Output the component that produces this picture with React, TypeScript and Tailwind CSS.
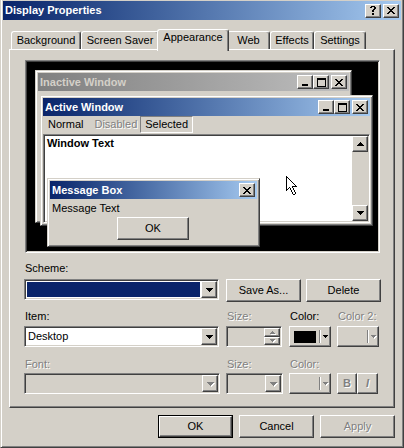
import React from "react";

// classic 3D edges
const raised =
  "border border-t-white border-l-white border-r-[#404040] border-b-[#404040] shadow-[inset_-1px_-1px_#808080,inset_1px_1px_#d4d0c8]";
const sunken =
  "border border-t-[#808080] border-l-[#808080] border-r-white border-b-white shadow-[inset_1px_1px_#404040,inset_-1px_-1px_#d4d0c8]";
const frame =
  "border border-t-[#d4d0c8] border-l-[#d4d0c8] border-r-[#404040] border-b-[#404040] shadow-[inset_1px_1px_#fff,inset_-1px_-1px_#808080]";
const dim = "text-[#808080] [text-shadow:1px_1px_0_#fff]";

// pixel glyphs: '#' = ink, '.' = paper, ' ' = transparent
const CLOSE = ["##    ##", " ##  ## ", "  ####  ", "   ##   ", "  ####  ", " ##  ## ", "##    ##"];
const MIN = ["      ", "      ", "      ", "      ", "      ", "      ", "######", "######"];
const MAX = ["#########", "#########", "#       #", "#       #", "#       #", "#       #", "#       #", "#       #", "#########"];
const HELP = [" #### ", "##  ##", "    ##", "   ## ", "  ##  ", "  ##  ", "      ", "  ##  ", "  ##  "];
const DOWN = ["#######", " ##### ", "  ###  ", "   #   "];
const UP = ["   #   ", "  ###  ", " ##### ", "#######"];
const DOWN_SM = ["#####", " ### ", "  #  "];
const UP_SM = ["  #  ", " ### ", "#####"];
const CURSOR = [
  "#",
  "##",
  "#.#",
  "#..#",
  "#...#",
  "#....#",
  "#.....#",
  "#......#",
  "#.......#",
  "#........#",
  "#.....#####",
  "#..#..#",
  "#.# #..#",
  "##  #..#",
  "#    #..#",
  "     #..#",
  "      #..#",
  "      #..#",
  "       ##",
];

function Pix({ rows, ink = "#000", paper = "#fff", className = "" }: { rows: string[]; ink?: string; paper?: string; className?: string }) {
  const w = Math.max(...rows.map((r) => r.length));
  return (
    <svg width={w} height={rows.length} shapeRendering="crispEdges" className={`block ${className}`}>
      {rows.flatMap((r, y) =>
        r.split("").map((c, x) =>
          c === " " ? null : <rect key={`${x}-${y}`} x={x} y={y} width={1} height={1} fill={c === "#" ? ink : paper} />
        )
      )}
    </svg>
  );
}

// greyed-out glyph with the white emboss under it
function DimPix({ rows }: { rows: string[] }) {
  return (
    <div className="relative">
      <Pix rows={rows} ink="#fff" className="absolute left-[1px] top-[1px]" />
      <Pix rows={rows} ink="#808080" className="relative" />
    </div>
  );
}

function CapBtn({ glyph, className = "" }: { glyph: string[]; className?: string }) {
  return (
    <div className={`${raised} bg-[#d4d0c8] w-[16px] h-[14px] flex items-center justify-center ${className}`}>
      <Pix rows={glyph} />
    </div>
  );
}

function Caption({ title, active, full }: { title: string; active: boolean; full: boolean }) {
  return (
    <div
      className={`h-[18px] flex items-center px-[2px] bg-linear-to-r ${
        active ? "from-[#0a246a] to-[#a6caf0] text-white" : "from-[#808080] to-[#c0c0c0] text-[#d4d0c8]"
      }`}
    >
      <span className="flex-1 font-bold">{title}</span>
      {full && <CapBtn glyph={MIN} />}
      {full && <CapBtn glyph={MAX} />}
      <CapBtn glyph={CLOSE} className={full ? "ml-[2px]" : ""} />
    </div>
  );
}

function Combo({ className, disabled, children }: { className: string; disabled?: boolean; children?: React.ReactNode }) {
  return (
    <div className={`${sunken} ${className} h-[21px] p-[1px] flex ${disabled ? "bg-[#d4d0c8]" : "bg-white"}`}>
      <div className="flex-1 min-w-0 flex items-center">{children}</div>
      <div className={`${raised} bg-[#d4d0c8] w-[16px] h-full flex items-center justify-center`}>
        {disabled ? <DimPix rows={DOWN} /> : <Pix rows={DOWN} />}
      </div>
    </div>
  );
}

function Button({ className = "", disabled, children }: { className?: string; disabled?: boolean; children: React.ReactNode }) {
  return (
    <div className={`${raised} ${className} w-[75px] h-[23px] bg-[#d4d0c8] flex items-center justify-center ${disabled ? dim : ""}`}>
      {children}
    </div>
  );
}

function ColorButton({ disabled }: { disabled?: boolean }) {
  return (
    <div className={`${raised} w-[42px] h-[21px] bg-[#d4d0c8] flex items-center pl-[4px]`}>
      <div className={`w-[22px] h-[12px] ${disabled ? "" : "bg-black"}`} />
      <div className="ml-[3px] w-[2px] h-[13px] border-l border-l-[#808080] border-r border-r-white" />
      <div className="ml-[2px]">{disabled ? <DimPix rows={DOWN_SM} /> : <Pix rows={DOWN_SM} />}</div>
    </div>
  );
}

const tabs = [
  { label: "Background", w: "w-[70px]" },
  { label: "Screen Saver", w: "w-[78px]" },
  { label: "Appearance", w: "w-[72px]", on: true },
  { label: "Web", w: "w-[43px]" },
  { label: "Effects", w: "w-[44px]" },
  { label: "Settings", w: "w-[52px]" },
];

export default function App() {
  return (
    <div className="w-[404px] h-[448px] bg-[#d4d0c8] font-['Liberation_Sans',Arial,sans-serif] text-[11px] leading-[13px] text-black overflow-hidden select-none">
      <div className="h-full pt-[1px] px-[2px] border-l border-l-[#d4d0c8] border-r border-r-[#404040] border-b border-b-[#404040] shadow-[inset_1px_0_#fff,inset_-1px_-1px_#808080]">
        {/* title bar */}
        <div className="h-[19px] flex items-center pl-[2px] pr-[2px] bg-linear-to-r from-[#0a246a] to-[#a6caf0] text-white">
          <span className="flex-1 font-bold">Display Properties</span>
          <CapBtn glyph={HELP} />
          <CapBtn glyph={CLOSE} className="ml-[2px]" />
        </div>

        {/* tabs */}
        <div className="mt-[9px] h-[20px] flex items-end pl-[8px]">
          {tabs.map((t) => (
            <div
              key={t.label}
              className={`${t.w} relative flex justify-center bg-[#d4d0c8] rounded-t-[3px] border-t border-l border-r border-t-white border-l-white border-r-[#404040] shadow-[inset_-1px_0_#808080] ${
                t.on ? "h-[22px] -mb-[2px] -mx-[2px] z-10 pt-[1px]" : "h-[18px] pt-[2px]"
              }`}
            >
              {t.label}
            </div>
          ))}
        </div>

        {/* tab page */}
        <div className="mx-[6px] h-[359px] border border-t-white border-l-white border-r-[#404040] border-b-[#404040] shadow-[inset_-1px_-1px_#808080] pl-[14px] pt-[10px]">
          {/* preview */}
          <div className={`${sunken} ml-[1px] w-[355px] h-[193px] bg-black relative`}>
            <div className={`${frame} absolute left-[9px] top-[9px] w-[317px] h-[153px] bg-[#d4d0c8] p-[2px]`}>
              <Caption title="Inactive Window" active={false} full />
            </div>

            <div className={`${frame} absolute left-[14px] top-[34px] w-[333px] h-[131px] bg-[#d4d0c8] p-[2px] flex flex-col`}>
              <Caption title="Active Window" active full />
              <div className="h-[18px] flex items-start pl-[5px]">
                <span className="pt-[2px]">Normal</span>
                <span className={`pt-[2px] ml-[11px] ${dim}`}>Disabled</span>
                <span className="ml-[3px] h-[17px] px-[4px] flex items-center border border-t-[#808080] border-l-[#808080] border-r-white border-b-white">
                  Selected
                </span>
              </div>
              <div className={`${sunken} flex-1 bg-white p-[1px] flex`}>
                <div className="flex-1 pl-[2px] pt-[1px] font-bold">Window Text</div>
                <div className="w-[16px] flex flex-col justify-between bg-[#d4d0c8]">
                  <div className={`${raised} h-[16px] flex items-center justify-center`}>
                    <Pix rows={UP} />
                  </div>
                  <div className={`${raised} h-[16px] flex items-center justify-center`}>
                    <Pix rows={DOWN} />
                  </div>
                </div>
              </div>
            </div>

            <div className={`${frame} absolute left-[21px] top-[117px] w-[213px] h-[69px] bg-[#d4d0c8] p-[2px]`}>
              <Caption title="Message Box" active full={false} />
              <div className="pl-[2px] pt-[3px]">Message Text</div>
              <div className={`${raised} ml-[67px] mt-[2px] w-[72px] h-[23px] flex items-center justify-center`}>OK</div>
            </div>

            <Pix rows={CURSOR} className="absolute left-[260px] top-[115px]" />
          </div>

          {/* scheme */}
          <div className="mt-[9px] pl-[1px]">Scheme:</div>
          <div className="mt-[4px] h-[23px] flex items-start">
            <Combo className="w-[195px]">
              <div className="ml-[1px] mr-[1px] h-[15px] flex-1 bg-[#0a246a]" />
            </Combo>
            <Button className="ml-[7px]">Save As...</Button>
            <Button className="ml-[5px]">Delete</Button>
          </div>

          {/* item */}
          <div className="mt-[8px] grid grid-cols-[202px_63px_48px_44px] pl-[1px]">
            <span>Item:</span>
            <span className={dim}>Size:</span>
            <span>Color:</span>
            <span className={dim}>Color 2:</span>
          </div>
          <div className="mt-[3px] grid grid-cols-[202px_63px_48px_44px] items-start">
            <Combo className="w-[195px]">
              <span className="pl-[2px]">Desktop</span>
            </Combo>
            <div className={`${sunken} w-[56px] h-[21px] p-[1px] flex justify-end bg-[#d4d0c8]`}>
              <div className="w-[16px] flex flex-col">
                <div className={`${raised} flex-1 flex items-center justify-center`}>
                  <DimPix rows={UP_SM} />
                </div>
                <div className={`${raised} flex-1 flex items-center justify-center`}>
                  <DimPix rows={DOWN_SM} />
                </div>
              </div>
            </div>
            <ColorButton />
            <ColorButton disabled />
          </div>

          {/* font */}
          <div className={`mt-[11px] grid grid-cols-[202px_63px_48px_44px] pl-[1px] ${dim}`}>
            <span>Font:</span>
            <span>Size:</span>
            <span>Color:</span>
          </div>
          <div className="mt-[2px] grid grid-cols-[202px_63px_48px_44px] items-start">
            <Combo className="w-[196px]" disabled />
            <Combo className="w-[57px]" disabled />
            <ColorButton disabled />
            <div className="flex">
              <div className={`${raised} w-[20px] h-[21px] flex items-center justify-center font-bold ${dim}`}>B</div>
              <div className={`${raised} w-[21px] h-[21px] flex items-center justify-center font-bold italic ${dim}`}>I</div>
            </div>
          </div>
        </div>

        {/* dialog buttons */}
        <div className="mt-[7px] flex justify-end gap-[6px] pr-[6px]">
          <div className="w-[75px] h-[23px] border border-black">
            <div className={`${raised} h-full flex items-center justify-center`}>OK</div>
          </div>
          <Button>Cancel</Button>
          <Button disabled>Apply</Button>
        </div>
      </div>
    </div>
  );
}
